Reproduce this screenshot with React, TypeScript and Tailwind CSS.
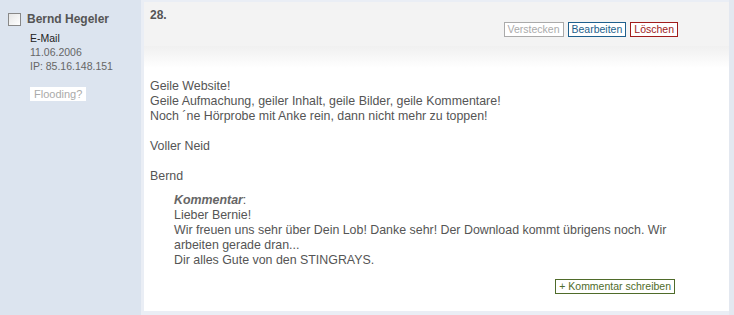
const App = () => {
  return (
    <div
      className="flex h-[315px] w-[734px] bg-[#dfe6f0] text-[12px] text-[#555]"
      style={{ fontFamily: '"Liberation Sans", Arial, sans-serif' }}
    >
      {/* Author sidebar */}
      <div className="w-[141px] shrink-0 bg-[#dce4ef] pl-[8px] pt-[12px]">
        <div className="flex items-start gap-[6px]">
          <div className="mt-[1px] h-[13px] w-[13px] border border-[#888] bg-gradient-to-br from-[#e6e6e6] to-white" />
          <div className="text-[12px] font-bold leading-[15px] text-[#555]">Bernd Hegeler</div>
        </div>
        <div className="pl-[22px] pt-[4px] text-[10.5px] leading-[14px]">
          <div className="text-[#222]">E-Mail</div>
          <div className="text-[#666]">11.06.2006</div>
          <div className="text-[#666]">IP: 85.16.148.151</div>
          <div className="mt-[14px] inline-block bg-white px-[4px] py-[1px] text-[11px] leading-[12px] text-[#aaa]">
            Flooding?
          </div>
        </div>
      </div>

      {/* Entry */}
      <div className="flex w-[588px] flex-col border-l-[3px] border-t-[2px] border-b-[4px] border-[#eaeef5] bg-white">
        <div className="h-[44px] bg-[#f3f3f3] px-[6px] pt-[4px]">
          <div className="text-[12px] font-bold text-[#555]">28.</div>
          <div className="-mt-[2px] flex justify-end gap-[4px] pr-[45px]">
            <span className="border border-[#aaa] bg-white px-[3px] text-[10.5px] leading-[13px] text-[#aaa]">Verstecken</span>
            <span className="border border-[#1e5f8c] bg-white px-[3px] text-[10.5px] leading-[13px] text-[#1e5f8c]">Bearbeiten</span>
            <span className="border border-[#a01c1c] bg-white px-[3px] text-[10.5px] leading-[13px] text-[#a01c1c]">Löschen</span>
          </div>
        </div>
        <div className="flex-1 bg-gradient-to-b from-[#f0f0f0] to-white to-[22px] px-[6px] pt-[33px] text-[12.4px] leading-[15px]">
          <p>Geile Website!</p>
          <p>Geile Aufmachung, geiler Inhalt, geile Bilder, geile Kommentare!</p>
          <p>Noch ´ne Hörprobe mit Anke rein, dann nicht mehr zu toppen!</p>
          <p className="mt-[15px]">Voller Neid</p>
          <p className="mt-[15px]">Bernd</p>
          <div className="mt-[9px] pl-[24px] pr-[50px]">
            <p>
              <b className="italic text-[#666]">Kommentar</b>:
            </p>
            <p>Lieber Bernie!</p>
            <p>Wir freuen uns sehr über Dein Lob! Danke sehr! Der Download kommt übrigens noch. Wir arbeiten gerade dran...</p>
            <p>Dir alles Gute von den STINGRAYS.</p>
          </div>
          <div className="mt-[11px] flex justify-end pr-[48px]">
            <span className="border border-[#4f6b2a] bg-white px-[3px] text-[10.5px] leading-[13px] text-[#4f6b2a]">
              + Kommentar schreiben
            </span>
          </div>
        </div>
      </div>
      <div className="flex-1 bg-[#e3e8f0]" />
    </div>
  );
};

export default App;
